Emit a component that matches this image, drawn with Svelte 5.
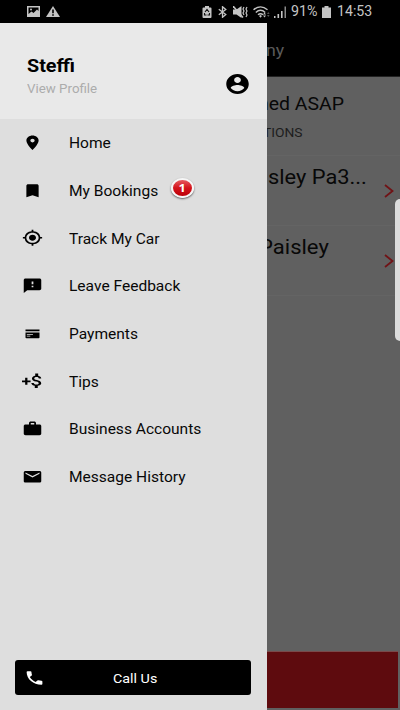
<script lang="ts">
  type MenuItem = {
    label: string;
    icon: string;
    badge?: number;
  };

  const menu: MenuItem[] = [
    {
      label: 'Home',
      icon: 'M12 2C8.13 2 5 5.13 5 9c0 5.25 7 13 7 13s7-7.75 7-13c0-3.87-3.13-7-7-7zm0 9.5a2.5 2.5 0 0 1 0-5 2.5 2.5 0 0 1 0 5z'
    },
    {
      label: 'My Bookings',
      icon: 'M17 3H7c-1.1 0-2 .9-2 2v16l7-3 7 3V5c0-1.1-.9-2-2-2z',
      badge: 1
    },
    {
      label: 'Track My Car',
      icon: 'M12 8c-2.21 0-4 1.79-4 4s1.79 4 4 4 4-1.79 4-4-1.79-4-4-4zm8.94 3A8.994 8.994 0 0 0 13 3.06V1h-2v2.06A8.994 8.994 0 0 0 3.06 11H1v2h2.06A8.994 8.994 0 0 0 11 20.94V23h2v-2.06A8.994 8.994 0 0 0 20.94 13H23v-2h-2.06zM12 19c-3.87 0-7-3.13-7-7s3.13-7 7-7 7 3.13 7 7-3.13 7-7 7z'
    },
    {
      label: 'Leave Feedback',
      icon: 'M20 2H4c-1.1 0-2 .9-2 2v18l4-4h14c1.1 0 2-.9 2-2V4c0-1.1-.9-2-2-2zm-7 12h-2v-2h2v2zm0-4h-2V6h2v4z'
    },
    {
      label: 'Payments',
      icon: 'M4 6h16v2.6H4zM4 10.4h16V17c0 .6-.4 1-1 1H5c-.6 0-1-.4-1-1zM5.5 12.5v1h7v-1zM5.5 14.7v1h4v-1z'
    },
    {
      label: 'Tips',
      icon: 'M3.6 8h2.6v3.500h3.600v2.400H6.200v3.500H3.600v-3.500H0v-2.400h3.600zM17 10.900c-2.270-.59-3-1.200-3-2.150 0-1.090 1.010-1.850 2.700-1.850 1.780 0 2.440.85 2.500 2.100h2.810c-.07-1.720-1.420-3.300-3.510-3.810V2h-3.400v3.160c-1.940.42-3.700 1.680-3.700 3.610 0 2.310 1.910 3.660 4.700 4.330 2.500.6 3 1.280 3 2.210 0 .69-.49 1.790-2.700 1.790-2.060 0-2.870-.92-2.980-2.100h-2.800c.12 2.190 2.060 3.420 3.980 3.830V22h3.400v-3.150c1.950-.37 4-1.500 4-3.550 0-2.840-2.730-3.810-5-4.400z'
    },
    {
      label: 'Business Accounts',
      icon: 'M20 6h-4V4c0-1.11-.89-2-2-2h-4c-1.11 0-2 .89-2 2v2H4c-1.11 0-2 .89-2 2v11c0 1.11.89 2 2 2h16c1.11 0 2-.89 2-2V8c0-1.11-.89-2-2-2zm-6 0h-4V4h4v2z'
    },
    {
      label: 'Message History',
      icon: 'M20 4H4c-1.1 0-2 .9-2 2v12c0 1.1.9 2 2 2h16c1.1 0 2-.9 2-2V6c0-1.1-.9-2-2-2zm0 4l-8 5-8-5V6l8 5 8-5v2z'
    }
  ];
</script>

<div class="phone">
  <header class="status">
    <div class="status-left">
      <svg width="13" height="11" viewBox="0 0 13 11">
        <path fill="#c4c4c4" fill-rule="evenodd" d="M0 0h13v11H0zM1.5 1.5v6.5l3-2.5 2 1.5 3.5-3.5 1.5 1.5V1.5z" />
        <circle cx="4" cy="3.5" r="1" fill="#c4c4c4" />
      </svg>
      <svg width="14" height="11" viewBox="0 0 14 11">
        <path fill="#c4c4c4" d="M7 0l7 11H0z" />
        <path fill="#000" d="M6.2 3.5h1.6v3.7H6.2zM6.2 8.2h1.6v1.5H6.2z" />
      </svg>
    </div>
    <div class="status-right">
      <svg width="10" height="12" viewBox="0 0 10 12">
        <path fill="#c4c4c4" d="M3 0h4v1.5h1.5q1 0 1 1V11q0 1-1 1h-7q-1 0-1-1V2.5q0-1 1-1H3z" />
        <path fill="none" stroke="#111" stroke-width="1.1" d="M3 6l2-2.5L7 6M2.5 7v2H4.5M7.500 7v2H5.500" />
      </svg>
      <svg class="bluetooth" width="9" height="12" viewBox="0 0 9 12">
        <path fill="none" stroke="#c4c4c4" stroke-width="1.3" d="M.8 3.2l7 5.4L4.5 11.3V.7l3.3 2.7-7 5.4" />
      </svg>
      <svg class="mute" width="15" height="12" viewBox="0 0 15 12">
        <path fill="#c4c4c4" d="M0 3.500h3.500l5-3.500v12L3.500 8.500H0z" />
        <path stroke="#c4c4c4" stroke-width="1.5" d="M0 0l10 11.5" />
        <path fill="none" stroke="#c4c4c4" stroke-width="1.2" d="M11 1l-1 2 1 2-1 2 1 2M14 1l-1 2 1 2-1 2 1 2-1 2" />
      </svg>
      <svg class="wifi" width="17" height="12" viewBox="0 0 17 12">
        <g fill="none" stroke="#c4c4c4" stroke-width="1.4">
          <path d="M.5 3.800Q7.500-2 14.500 3.800" />
          <path d="M2.800 6.400Q7.500 2.200 12.200 6.400" />
          <path d="M5 8.800Q7.500 6.500 10 8.800" />
        </g>
        <path fill="#c4c4c4" d="M6 10l1.500-1 1.500 1-1.500 1.800zM10 8.500l1.500-2 1.500 2zM10 9.500h3l-1.500 2z" />
        <path fill="#555" d="M14 8l1.300-2 1.300 2zM14 9h2.600l-1.300 2z" />
      </svg>
      <svg class="signal" width="13" height="12" viewBox="0 0 13 12">
        <path fill="#c4c4c4" d="M0 10h1.500v2H0zM3.500 8h1.600v4H3.500zM7 5h1.600v7H7z" />
        <path fill="#8a8a8a" d="M10.500 .5H12V12h-1.500z" />
      </svg>
      <span class="percent">91%</span>
      <svg class="battery" width="9" height="12" viewBox="0 0 9 12">
        <path fill="#c4c4c4" d="M2.500 0h4v1.400H9V12H0V1.400h2.500z" />
      </svg>
      <span class="clock">14:53</span>
    </div>
  </header>

  <div class="stage">
    <main class="page">
      <div class="title"><span>ny</span></div>
      <div class="booking"><span>ned ASAP</span></div>
      <div class="section"><span>TIONS</span></div>
      <div class="stop first">
        <span>sley Pa3...</span>
        <svg width="10" height="14" viewBox="0 0 10 14"><path d="M1 1l7.500 6L1 13" /></svg>
      </div>
      <div class="stop second">
        <span>Paisley</span>
        <svg width="10" height="14" viewBox="0 0 10 14"><path d="M1 1l7.500 6L1 13" /></svg>
      </div>
      <div class="action"></div>
    </main>
    <div class="edge-handle"></div>

    <aside class="drawer">
      <div class="profile">
        <div class="who">
          <div class="name"><span>Steffi</span></div>
          <div class="view"><span>View Profile</span></div>
        </div>
        <svg class="avatar" width="27" height="24" viewBox="0 0 24 24" preserveAspectRatio="none">
          <path d="M12 2C6.480 2 2 6.480 2 12s4.480 10 10 10 10-4.480 10-10S17.520 2 12 2zm0 3c1.660 0 3 1.340 3 3s-1.340 3-3 3-3-1.340-3-3 1.340-3 3-3zm0 14.200c-2.500 0-4.710-1.280-6-3.220.03-1.990 4-3.080 6-3.080 1.990 0 5.970 1.090 6 3.080-1.290 1.940-3.500 3.220-6 3.220z" />
        </svg>
      </div>

      <nav>
        {#each menu as item}
          <div class="row">
            <svg class="icon" viewBox="0 0 24 24" preserveAspectRatio="none">
              <path fill-rule="evenodd" d={item.icon} />
            </svg>
            <div class="label">
              <span>{item.label}</span>
              {#if item.badge}
                <b class="badge"><i>{item.badge}</i></b>
              {/if}
            </div>
          </div>
        {/each}
      </nav>

      <div class="call">
        <svg width="21" height="18" viewBox="0 0 24 24" preserveAspectRatio="none">
          <path d="M6.620 10.790c1.440 2.830 3.760 5.140 6.590 6.590l2.200-2.200c.27-.27.67-.36 1.020-.24 1.120.37 2.330.57 3.570.57.55 0 1 .45 1 1V20c0 .55-.45 1-1 1-9.390 0-17-7.610-17-17 0-.55.45-1 1-1h3.500c.55 0 1 .45 1 1 0 1.250.2 2.450.57 3.570.11.35.03.74-.25 1.020l-2.200 2.200z" />
        </svg>
        <span>Call Us</span>
      </div>
    </aside>
  </div>
</div>

<style>
  :global(body) {
    background: #000;
  }

  .phone {
    display: flex;
    flex-direction: column;
    width: 400px;
    height: 710px;
    overflow: hidden;
    font-family: Roboto, "Liberation Sans", sans-serif;
    color: #080808;
  }

  /* the whole screen uses slightly widened lettering */
  span {
    display: inline-block;
    white-space: nowrap;
    transform: scaleX(1.11);
    transform-origin: left center;
  }

  .status {
    display: flex;
    flex: none;
    justify-content: space-between;
    height: 23px;
    box-sizing: border-box;
    padding: 0 28px 0 27px;
    background: #000;
    color: #c4c4c4;
    font-size: 14px;
    line-height: 23px;
  }

  .status-left,
  .status-right {
    display: flex;
    align-items: center;
  }

  .status-left {
    gap: 6px;
  }

  .bluetooth {
    margin-left: 6px;
  }

  .mute {
    margin-left: 6px;
  }

  .wifi {
    margin-left: 5px;
  }

  .signal {
    margin-left: 4px;
  }

  .percent {
    width: 26px;
    margin-left: 4px;
    transform: scaleX(1.02);
  }

  .battery {
    margin-left: 5px;
  }

  .clock {
    width: 35px;
    margin-left: 6px;
    transform: scaleX(1.01);
  }

  .stage {
    position: relative;
    flex: 1;
  }

  .page {
    display: flex;
    flex-direction: column;
    height: 100%;
    box-sizing: border-box;
    padding-bottom: 2px;
    background: #606060;
  }

  .title {
    height: 54px;
    box-sizing: border-box;
    padding-left: 266px;
    border-bottom: 1px solid #222;
    background: #000;
    color: #5a5a5a;
    font-size: 16px;
    line-height: 56px;
  }

  .booking {
    height: 46px;
    padding-left: 258px;
    font-size: 17.5px;
    line-height: 54px;
  }

  .section {
    height: 33px;
    box-sizing: border-box;
    padding-left: 263px;
    border-bottom: 1px solid #646464;
    color: #1d1d1d;
    font-size: 12px;
    line-height: 21px;
  }

  .section span {
    transform: scaleX(1.15);
  }

  .stop {
    display: flex;
    justify-content: space-between;
    box-sizing: border-box;
    height: 70px;
    padding: 0 6px 0 268px;
    border-bottom: 1px solid #646464;
    font-size: 19.5px;
    line-height: 44px;
  }

  .first span {
    transform: scaleX(1.12);
  }

  .stop svg {
    flex: none;
    margin-top: 27.5px;
  }

  .stop path {
    fill: none;
    stroke: #701316;
    stroke-width: 1.8;
  }

  .second {
    padding-left: 259px;
  }

  .second span {
    transform: scaleX(1.13);
  }

  .action {
    height: 56px;
    margin: auto 2px 0 0;
    border-top: 1px solid #7a4a4a;
    background: #5e0b0e;
  }

  .edge-handle {
    position: absolute;
    top: 176px;
    right: 0;
    width: 5px;
    height: 142px;
    border-radius: 5px 0 0 5px;
    background: #dcdcdc;
  }

  .drawer {
    position: absolute;
    top: 0;
    bottom: 0;
    left: 0;
    display: flex;
    flex-direction: column;
    width: 266.5px;
    background: #dedede;
  }

  .profile {
    display: flex;
    flex: none;
    justify-content: space-between;
    height: 96px;
    box-sizing: border-box;
    padding: 31px 15.5px 0 26.5px;
    background: #e9e9e9;
  }

  .name {
    height: 24px;
    font-size: 17.5px;
    font-weight: 700;
    line-height: 24px;
    color: #000;
  }

  .name span {
    transform: scaleX(1.13);
  }

  .view {
    font-size: 12px;
    line-height: 22px;
    color: #acacac;
  }

  .avatar {
    margin-top: 18px;
  }

  nav {
    display: flex;
    flex-direction: column;
  }

  .row {
    display: flex;
    align-items: center;
    height: 47.68px;
    padding-left: 21.5px;
  }

  .icon {
    width: 21px;
    height: 17.5px;
    margin-right: 26.5px;
  }

  .label {
    position: relative;
    padding-top: 1px;
    font-size: 14px;
    line-height: 20px;
  }

  .badge {
    position: absolute;
    top: -2px;
    left: 102px;
    display: flex;
    align-items: center;
    justify-content: center;
    width: 19px;
    height: 16px;
    border: 2px solid #f6f6f6;
    border-radius: 50%;
    background: linear-gradient(#e65a5e, #d3141b 50%, #bd0008);
    box-shadow: 0 1px 2px rgba(0, 0, 0, 0.6);
    color: #fff;
    font-family: "Open Sans", sans-serif;
    font-size: 11px;
    line-height: 16px;
  }

  .badge i {
    font-style: normal;
    transform: scaleX(1.15);
  }

  .call {
    display: flex;
    align-items: center;
    height: 35px;
    margin: auto 15.5px 15px 15px;
    padding-left: 8.5px;
    border-radius: 3px;
    background: #000;
    color: #fff;
    font-size: 13.5px;
  }

  .call svg {
    margin-right: 68px;
    fill: #fff;
  }

  .call span {
    transform: scaleX(1.06);
  }
</style>
